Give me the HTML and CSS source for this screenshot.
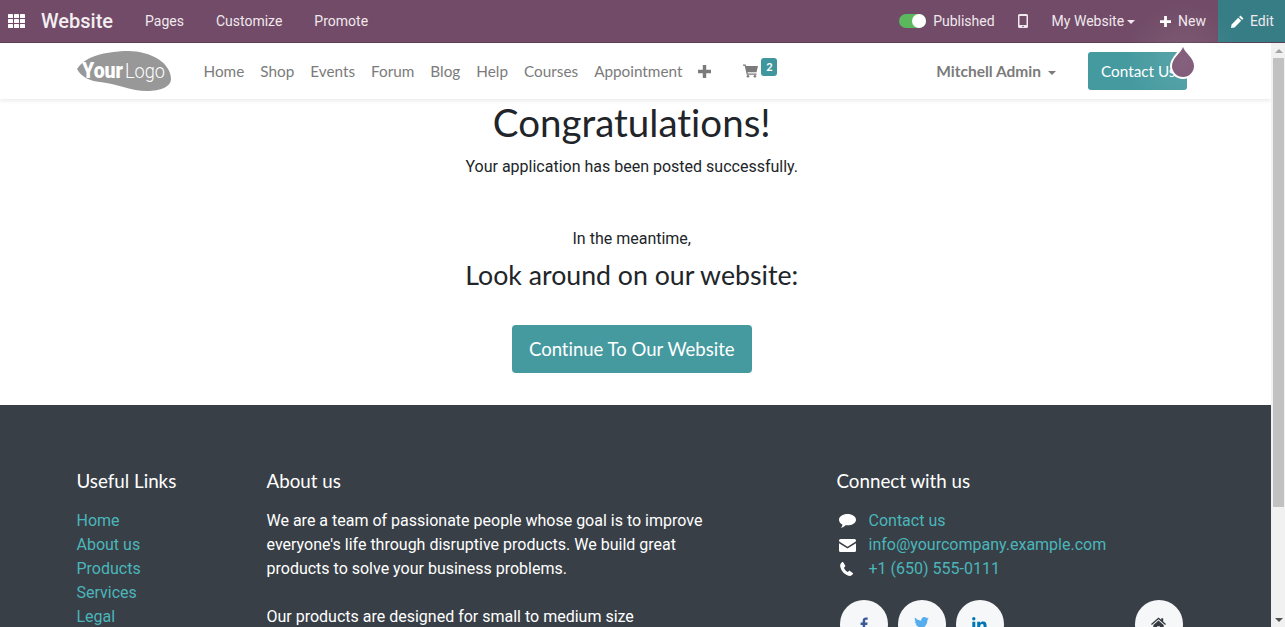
FILE: index.html
```html
<!DOCTYPE html>
<html lang="en">
<head>
    <meta charset="UTF-8">
    <meta name="viewport" content="width=device-width, initial-scale=1.0">
    <title>Thank You | My Website</title>
    <link rel="stylesheet" href="styles.css">
</head>
<body>
    <!-- Admin bar -->
    <div class="topbar">
        <div class="topbar-left">
            <svg class="apps-icon" viewBox="0 0 17 14" width="17" height="14"><g fill="#fff"><rect x="0" y="0" width="5" height="4" rx=".6"/><rect x="6" y="0" width="5" height="4" rx=".6"/><rect x="12" y="0" width="5" height="4" rx=".6"/><rect x="0" y="5" width="5" height="4" rx=".6"/><rect x="6" y="5" width="5" height="4" rx=".6"/><rect x="12" y="5" width="5" height="4" rx=".6"/><rect x="0" y="10" width="5" height="4" rx=".6"/><rect x="6" y="10" width="5" height="4" rx=".6"/><rect x="12" y="10" width="5" height="4" rx=".6"/></g></svg>
            <span class="brand">Website</span>
            <a class="top-link">Pages</a>
            <a class="top-link">Customize</a>
            <a class="top-link">Promote</a>
        </div>
        <div class="topbar-right">
            <span class="toggle"><span class="knob"></span></span>
            <span class="published">Published</span>
            <svg class="mobile-icon" viewBox="0 0 10 14" width="10" height="14"><path fill="#f0e8ee" fill-rule="evenodd" d="M1.500 0h7A1.500 1.500 0 0 1 10 1.500v11A1.500 1.500 0 0 1 8.500 14h-7A1.500 1.500 0 0 1 0 12.500v-11A1.500 1.500 0 0 1 1.500 0zM1.500 2v9h7V2zM5 11.700a.8.8 0 1 0 0 1.600.8.800 0 0 0 0-1.600z"/></svg>
            <span class="my-website">My Website<i class="caret"></i></span>
            <span class="new-btn">
                <svg viewBox="0 0 12 12" width="11" height="11"><path fill="#fff" d="M4.500 0h3v4.500H12v3H7.500V12h-3V7.500H0v-3h4.500z"/></svg>
                New
            </span>
            <span class="edit-btn">
                <svg viewBox="0 0 14 14" width="13" height="13"><path fill="#fff" d="M10.200.6l3.200 3.200-1.500 1.500-3.200-3.200zM7.800 3l3.200 3.200-7.200 7.200L0 14l.6-3.800z"/></svg>
                Edit
            </span>
        </div>
    </div>

    <div class="viewport">
        <div class="page">
            <!-- Site header -->
            <header class="site-header">
                <div class="container header-row">
                    <svg class="logo" viewBox="0 0 95 40" width="95" height="40">
                        <path fill="#989898" d="M1 18C5 12 10 9 14 7C25 2 40 0 52 0C75 0 95 12 95 28C95 36 84 40 71 40C55 40 42 33 24 31C14 30 5 26 1 18z"/>
                        <text x="6" y="27" textLength="41" lengthAdjust="spacingAndGlyphs" class="logo-your">Your</text>
                        <text x="49" y="27" textLength="40" lengthAdjust="spacingAndGlyphs" class="logo-word">Logo</text>
                    </svg>
                    <nav class="main-nav">
                        <a>Home</a>
                        <a>Shop</a>
                        <a>Events</a>
                        <a>Forum</a>
                        <a>Blog</a>
                        <a>Help</a>
                        <a>Courses</a>
                        <a>Appointment</a>
                        <svg class="plus-icon" viewBox="0 0 13 13" width="13" height="13"><path fill="#7b7b7b" d="M4.800 0h3.400v4.800H13v3.400H8.200V13H4.800V8.200H0V4.800h4.800z"/></svg>
                        <span class="cart">
                            <svg viewBox="0 0 16 14" width="15" height="14"><path fill="#7b7b7b" d="M0 0h2.800l.5 1.600H16l-1.600 6.600H4.800l.4 1.500h9.300v1.300H4L1.800 1.400H0z"/><circle cx="5.300" cy="12.600" r="1.400" fill="#7b7b7b"/><circle cx="12.700" cy="12.600" r="1.400" fill="#7b7b7b"/></svg>
                            <span class="cart-badge">2</span>
                        </span>
                    </nav>
                    <span class="user-menu">Mitchell Admin<i class="caret caret-grey"></i></span>
                    <a class="contact-btn">Contact Us</a>
                </div>
            </header>

            <!-- Thank you message -->
            <main class="thanks">
                <div class="container">
                    <h1>Congratulations!</h1>
                    <p class="posted">Your application has been posted successfully.</p>
                    <p class="meantime">In the meantime,</p>
                    <h3>Look around on our website:</h3>
                    <a class="continue-btn">Continue To Our Website</a>
                </div>
            </main>

            <!-- Footer -->
            <footer class="site-footer">
                <div class="container footer-row">
                    <div class="col-links">
                        <h5>Useful Links</h5>
                        <ul>
                            <li><a>Home</a></li>
                            <li><a>About us</a></li>
                            <li><a>Products</a></li>
                            <li><a>Services</a></li>
                            <li><a>Legal</a></li>
                        </ul>
                    </div>
                    <div class="col-about">
                        <h5>About us</h5>
                        <p>We are a team of passionate people whose goal is to improve everyone's life through disruptive products. We build great products to solve your business problems.</p>
                        <p>Our products are designed for small to medium size</p>
                    </div>
                    <div class="col-connect">
                        <h5>Connect with us</h5>
                        <ul>
                            <li>
                                <svg viewBox="0 0 17 14" width="17" height="14"><path fill="#fff" d="M8.500 0C13.200 0 17 2.500 17 5.700s-3.800 5.600-8.500 5.600c-.7 0-1.400 0-2-.1C5.200 12.600 3.500 13.500 1.800 14c.8-1 1.500-2 1.600-3.500C1.300 9.500 0 7.700 0 5.700 0 2.500 3.800 0 8.500 0z"/></svg>
                                <a>Contact us</a>
                            </li>
                            <li>
                                <svg viewBox="0 0 17 13" width="17" height="13"><path fill="#fff" d="M1.500 0h14A1.500 1.500 0 0 1 17 1.500c0 .7-.4 1.200-1 1.600L8.500 7.800 1 3.100C.4 2.700 0 2.200 0 1.500A1.500 1.500 0 0 1 1.500 0zM0 4.300l8.500 5.300L17 4.300v7.200a1.500 1.500 0 0 1-1.500 1.500h-14A1.500 1.500 0 0 1 0 11.500z"/></svg>
                                <a>info@yourcompany.example.com</a>
                            </li>
                            <li>
                                <svg viewBox="0 0 13 14" width="13" height="14" class="phone"><path fill="#fff" d="M3.200.3l2 3.300c.2.400.1.800-.2 1.100L3.900 5.800c.6 1.800 2 3.400 3.800 4.300l1.200-1c.3-.3.700-.3 1.100-.1l2.700 2c.4.300.4.700.2 1.100-.8 1.200-2 2-3.300 1.800C5 13.200 1 9 .2 4.200 0 2.800.8 1 2 .2c.4-.2.900-.2 1.200.1z"/></svg>
                                <a>+1 (650) 555-0111</a>
                            </li>
                        </ul>
                        <div class="social-row">
                            <span class="social">
                                <svg viewBox="0 0 9 16" width="8" height="14"><path fill="#3b5998" d="M5.800 16V9h2.400l.4-2.800H5.800V4.500c0-.8.200-1.300 1.400-1.300h1.500V.7C8.400.7 7.600.600 6.600.600 4.500.600 3 1.900 3 4.200v2H.6V9H3v7z"/></svg>
                            </span>
                            <span class="social">
                                <svg viewBox="0 0 16 13" width="15" height="12"><path fill="#55acee" d="M16 1.500c-.6.300-1.200.4-1.900.5.700-.4 1.200-1 1.400-1.800-.6.400-1.300.6-2 .8C12.900.400 12 0 11 0 9.200 0 7.700 1.500 7.700 3.300c0 .3 0 .5.100.7C5 3.900 2.600 2.600 1.100.6.800 1.100.7 1.600.7 2.200c0 1.100.6 2.100 1.500 2.700-.5 0-1-.2-1.500-.4 0 1.600 1.100 2.900 2.600 3.200-.5.100-1 .2-1.500.1.400 1.300 1.600 2.200 3.100 2.300C3.700 11.200 1.900 11.800 0 11.600 1.500 12.500 3.200 13 5 13c6 0 9.400-5 9.400-9.400v-.4c.6-.5 1.200-1.100 1.600-1.700z"/></svg>
                            </span>
                            <span class="social">
                                <svg viewBox="0 0 15 14" width="15" height="14"><path fill="#0077b5" d="M.3 4.700h3v9.300h-3zM1.800 0a1.700 1.700 0 1 1 0 3.400 1.700 1.700 0 0 1 0-3.400zM5.200 4.700H8V6c.5-.9 1.500-1.500 3-1.500 3 0 3.600 2 3.600 4.500V14h-3V9.600c0-1.100 0-2.500-1.500-2.500S8.200 8.300 8.200 9.500V14h-3z"/></svg>
                            </span>
                            <span class="social social-home">
                                <svg viewBox="0 0 16 13" width="15" height="13"><path fill="#343a40" d="M8 0l3 2.600V1h2v3.300L16 7l-.9 1L8 1.900.9 8 0 7zM8 3.300l5.500 4.700V13H9.500V9.500h-3V13H2.500V8z"/></svg>
                            </span>
                        </div>
                    </div>
                </div>
            </footer>

            <!-- Odoo drop cursor over the Contact Us button -->
            <svg class="drop" viewBox="0 0 28 38" width="28" height="38"><path class="drop-shape" d="M14 4C16 10 25 15 25 23A11 11 0 0 1 3 23C3 15 12 10 14 4z"/></svg>
        </div>

        <!-- Scrollbar -->
        <div class="scrollbar">
            <div class="arrow-up"></div>
            <div class="thumb"></div>
            <div class="arrow-down"></div>
        </div>
    </div>

    <!-- Soft click ripple around the cursor -->
    <div class="glow"></div>
</body>
</html>
```

FILE: styles.css
```css
/* General Reset */
* {
    margin: 0;
    padding: 0;
    box-sizing: border-box;
}
body {
    font-family: Roboto, 'Liberation Sans', sans-serif;
    font-size: 16px;
    line-height: 24px;
    font-variant-ligatures: none;
    color: #212529;
    background: #fff;
    height: 100vh;
    overflow: hidden;
    display: flex;
    flex-direction: column;
}
ul {
    list-style: none;
}
.container {
    width: 1110.5px;
    margin-left: 76.5px;
}

/* Admin bar */
.topbar {
    height: 43px;
    flex: none;
    display: flex;
    justify-content: space-between;
    background: #714b67;
    border-bottom: 1px solid #5e3f56;
    color: #f0e8ee;
    font-size: 14px;
}
.topbar-left, .topbar-right {
    display: flex;
    align-items: center;
}
.apps-icon {
    margin-left: 8px;
}
.brand {
    margin-left: 16px;
    font-size: 20px;
    font-weight: 500;
    color: #f3eef2;
}
.top-link {
    margin-left: 32px;
}
.toggle {
    width: 27px;
    height: 14px;
    border-radius: 7px;
    background: #5cb85c;
    position: relative;
}
.knob {
    position: absolute;
    top: 0;
    right: 0;
    width: 14px;
    height: 14px;
    border-radius: 50%;
    background: #fff;
}
.published {
    margin-left: 7px;
}
.mobile-icon {
    margin-left: 23px;
}
.my-website {
    margin-left: 24px;
}
.caret {
    display: inline-block;
    margin-left: 3px;
    vertical-align: 2px;
    border-top: 4px solid currentColor;
    border-left: 4px solid transparent;
    border-right: 4px solid transparent;
}
.new-btn {
    margin-left: 25px;
    display: flex;
    align-items: center;
    gap: 7px;
}
.edit-btn {
    margin-left: 12px;
    width: 67px;
    height: 100%;
    background: #367d85;
    display: flex;
    align-items: center;
    padding-left: 13px;
    gap: 6px;
}

/* Page area */
.viewport {
    flex: 1;
    display: flex;
    min-height: 0;
}
.page {
    flex: 1;
    min-width: 0;
    position: relative;
    overflow: hidden;
}
.scrollbar {
    width: 14px;
    flex: none;
    background: #f1f1f1;
    display: flex;
    flex-direction: column;
    align-items: center;
    padding-left: 1px;
}
.arrow-up, .arrow-down {
    width: 0;
    height: 0;
    flex: none;
    border-left: 4px solid transparent;
    border-right: 4px solid transparent;
}
.arrow-up {
    margin: 6px 0 5px;
    border-bottom: 4px solid #a3a3a3;
}
.arrow-down {
    margin: auto 0 5px;
    border-top: 4px solid #505050;
}
.thumb {
    width: 11px;
    height: 449px;
    background: #c1c1c1;
}

/* Site header */
.site-header {
    height: 56px;
    background: #fff;
    box-shadow: 0 2px 4px rgba(0, 0, 0, 0.08);
    position: relative;
    font-family: Lato, 'Noto Sans', sans-serif;
}
.header-row {
    height: 100%;
    display: flex;
    align-items: center;
}
.logo {
    flex: none;
    margin-left: -1px;
    overflow: visible;
}
.logo-your {
    font-family: Roboto, sans-serif;
    font-size: 22px;
    font-weight: 900;
    fill: #fff;
}
.logo-word {
    font-family: Roboto, sans-serif;
    font-size: 21px;
    font-weight: 300;
    fill: #fff;
}
.main-nav {
    display: flex;
    align-items: center;
    margin-left: 33px;
    gap: 16px;
    font-size: 15.300px;
    color: #7b7b7b;
}
.cart {
    display: flex;
    margin-left: 16px;
    position: relative;
    width: 34px;
}
.cart-badge {
    position: absolute;
    left: 18px;
    top: -6px;
    width: 16px;
    height: 18px;
    border-radius: 3px;
    background: #3f979d;
    color: #fff;
    font-size: 11px;
    font-weight: 700;
    line-height: 17px;
    text-align: center;
}
.user-menu {
    margin-left: auto;
    font-size: 15.500px;
    font-weight: 700;
    color: #7b7b7b;
}
.caret-grey {
    margin-left: 7px;
}
.contact-btn {
    margin-left: 32px;
    width: 99px;
    height: 38px;
    border-radius: 3px;
    background: #459a9f;
    color: #fff;
    font-size: 15.300px;
    line-height: 38px;
    padding-left: 13px;
    white-space: nowrap;
}
.drop {
    position: absolute;
    left: 1169px;
    top: 0;
}
.drop-shape {
    fill: #784f6f;
    stroke: #fff;
    stroke-width: 4px;
    paint-order: stroke;
}
.glow {
    position: absolute;
    left: 1123px;
    top: 2px;
    width: 120px;
    height: 120px;
    border-radius: 50%;
    background: radial-gradient(circle, rgba(255, 255, 255, 0.1), rgba(255, 255, 255, 0) 70%);
}

/* Thank you message */
.thanks {
    height: 306px;
    text-align: center;
    font-size: 16px;
    background: #fff;
}
h1, h3, h5, .continue-btn {
    font-family: Lato, 'Noto Sans', sans-serif;
    font-weight: 400;
}
.thanks h1 {
    font-size: 38.500px;
    line-height: 47px;
    color: #212529;
}
.posted {
    margin-top: 9px;
}
.meantime {
    margin-top: 48px;
}
.thanks h3 {
    margin-top: 8px;
    font-size: 26.700px;
    line-height: 32px;
}
.continue-btn {
    display: inline-block;
    margin-top: 34px;
    padding: 0 17px;
    height: 48px;
    line-height: 48px;
    border-radius: 4px;
    background: #459a9f;
    color: #fff;
    font-size: 18.550px;
}

/* Footer */
.site-footer {
    background: #393f47;
    color: #fff;
    padding-top: 64px;
    height: 300px;
}
.footer-row {
    display: flex;
}
.site-footer h5 {
    font-size: 18.750px;
    line-height: 24px;
    margin-bottom: 16px;
}
.site-footer a {
    color: #4ab6ba;
}
.col-links {
    width: 190px;
    flex: none;
}
.col-about {
    width: 570px;
    flex: none;
}
.col-about p {
    width: 450px;
    margin-bottom: 24px;
}
.col-connect ul li {
    display: flex;
    align-items: center;
}
.col-connect ul svg {
    flex: none;
    margin: 0 13px 0 2px;
}
.col-connect ul svg.phone {
    margin: 0 15.500px 0 3.500px;
}
.social-row {
    display: flex;
    gap: 10px;
    margin: 19px 0 0 3px;
}
.social {
    width: 48px;
    height: 48px;
    border-radius: 50%;
    background: #f6f7f9;
    display: flex;
    justify-content: center;
    padding-top: 17px;
}
.social-home {
    margin-left: 121px;
}
```
